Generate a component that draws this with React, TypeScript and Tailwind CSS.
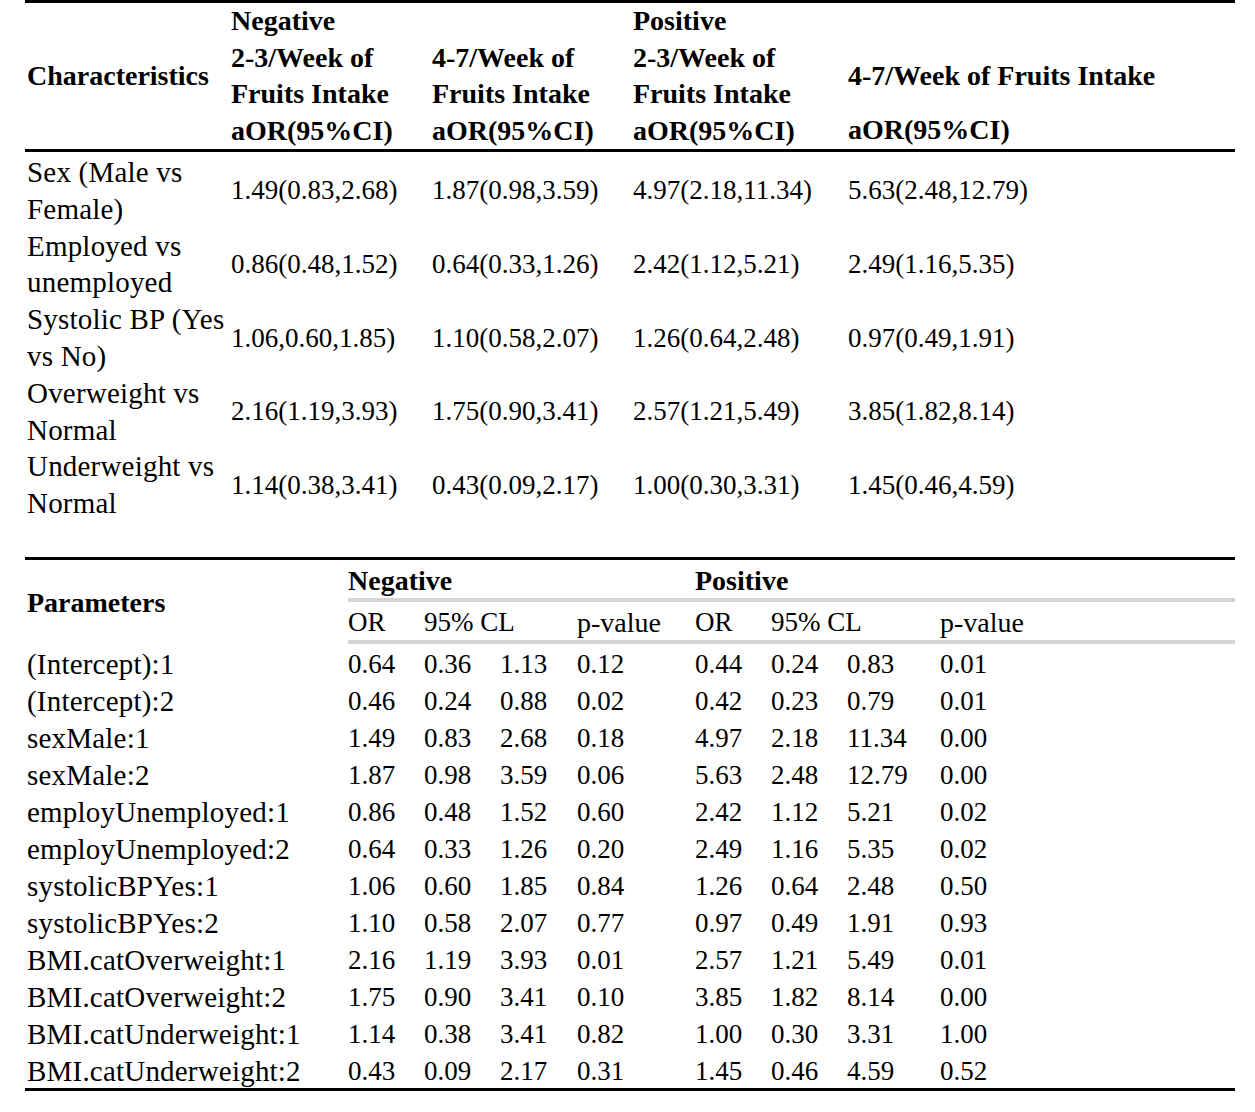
import React from 'react';

interface AdjustedRow {
    label: [string, string];
    values: string[];
}

const ADJUSTED_ROWS: AdjustedRow[] = [
    { label: ['Sex (Male vs', 'Female)'], values: ['1.49(0.83,2.68)', '1.87(0.98,3.59)', '4.97(2.18,11.34)', '5.63(2.48,12.79)'] },
    { label: ['Employed vs', 'unemployed'], values: ['0.86(0.48,1.52)', '0.64(0.33,1.26)', '2.42(1.12,5.21)', '2.49(1.16,5.35)'] },
    { label: ['Systolic BP (Yes', 'vs No)'], values: ['1.06,0.60,1.85)', '1.10(0.58,2.07)', '1.26(0.64,2.48)', '0.97(0.49,1.91)'] },
    { label: ['Overweight vs', 'Normal'], values: ['2.16(1.19,3.93)', '1.75(0.90,3.41)', '2.57(1.21,5.49)', '3.85(1.82,8.14)'] },
    { label: ['Underweight vs', 'Normal'], values: ['1.14(0.38,3.41)', '0.43(0.09,2.17)', '1.00(0.30,3.31)', '1.45(0.46,4.59)'] },
];

const MODEL_ROWS: string[][] = [
    ['(Intercept):1', '0.64', '0.36', '1.13', '0.12', '0.44', '0.24', '0.83', '0.01'],
    ['(Intercept):2', '0.46', '0.24', '0.88', '0.02', '0.42', '0.23', '0.79', '0.01'],
    ['sexMale:1', '1.49', '0.83', '2.68', '0.18', '4.97', '2.18', '11.34', '0.00'],
    ['sexMale:2', '1.87', '0.98', '3.59', '0.06', '5.63', '2.48', '12.79', '0.00'],
    ['employUnemployed:1', '0.86', '0.48', '1.52', '0.60', '2.42', '1.12', '5.21', '0.02'],
    ['employUnemployed:2', '0.64', '0.33', '1.26', '0.20', '2.49', '1.16', '5.35', '0.02'],
    ['systolicBPYes:1', '1.06', '0.60', '1.85', '0.84', '1.26', '0.64', '2.48', '0.50'],
    ['systolicBPYes:2', '1.10', '0.58', '2.07', '0.77', '0.97', '0.49', '1.91', '0.93'],
    ['BMI.catOverweight:1', '2.16', '1.19', '3.93', '0.01', '2.57', '1.21', '5.49', '0.01'],
    ['BMI.catOverweight:2', '1.75', '0.90', '3.41', '0.10', '3.85', '1.82', '8.14', '0.00'],
    ['BMI.catUnderweight:1', '1.14', '0.38', '3.41', '0.82', '1.00', '0.30', '3.31', '1.00'],
    ['BMI.catUnderweight:2', '0.43', '0.09', '2.17', '0.31', '1.45', '0.46', '4.59', '0.52'],
];

const headCell = 'h-[42px] border-b-4 border-[#d4d4d4] pt-[3px] leading-[35px]';

const App: React.FC = () => {
    return (
        <div className="min-h-[1112px] w-[1255px] bg-white text-black font-['Liberation_Serif',serif] text-[27px]">
            {/* adjusted odds ratios */}
            <div className="ml-[25px] w-[1210px] border-t-[3px] border-black">
                <div className="grid grid-cols-[206px_201px_201px_215px_1fr] border-b-[3px] border-black font-bold text-[28px] leading-[36.5px]">
                    <div className="self-center pl-[2px]">Characteristics</div>
                    <div>Negative<br />2-3/Week of<br />Fruits Intake<br />aOR(95%CI)</div>
                    <div className="self-end">4-7/Week of<br />Fruits Intake<br />aOR(95%CI)</div>
                    <div>Positive<br />2-3/Week of<br />Fruits Intake<br />aOR(95%CI)</div>
                    <div className="pt-[55px]">
                        <div>4-7/Week of Fruits Intake</div>
                        <div className="mt-[17px]">aOR(95%CI)</div>
                    </div>
                </div>
                <div className="pt-[2px]">
                    {ADJUSTED_ROWS.map((row) => (
                        <div key={row.label[0]} className="grid grid-cols-[206px_201px_201px_215px_1fr] leading-[36.8px]">
                            <div className="pl-[2px] text-[29px] tracking-[0.2px]">{row.label[0]}<br />{row.label[1]}</div>
                            {row.values.map((v, i) => (
                                <div key={i} className="self-center">{v}</div>
                            ))}
                        </div>
                    ))}
                </div>
            </div>

            {/* model coefficients */}
            <div className="ml-[25px] mt-[35px] w-[1210px] border-t-[3px] border-b-[3px] border-black">
                <div className="grid grid-cols-[323px_76px_76px_77px_118px_76px_76px_93px_1fr]">
                    <div className="row-span-2 flex items-center pl-[2px] pt-[3px] font-bold text-[28px]">Parameters</div>
                    <div className={`col-span-4 font-bold text-[28px] ${headCell}`}>Negative</div>
                    <div className={`col-span-4 font-bold text-[28px] ${headCell}`}>Positive</div>
                    <div className={headCell}>OR</div>
                    <div className={`col-span-2 ${headCell}`}>95% CL</div>
                    <div className={`text-[28px] ${headCell}`}>p-value</div>
                    <div className={headCell}>OR</div>
                    <div className={`col-span-2 ${headCell}`}>95% CL</div>
                    <div className={`text-[28px] ${headCell}`}>p-value</div>
                </div>
                {MODEL_ROWS.map((row) => (
                    <div key={row[0]} className="grid h-[37px] grid-cols-[323px_76px_76px_77px_118px_76px_76px_93px_1fr] pt-[4px] leading-[33px]">
                        {row.map((cell, i) => (
                            <div key={i} className={i === 0 ? 'pl-[2px] text-[29px] tracking-[0.2px]' : ''}>{cell}</div>
                        ))}
                    </div>
                ))}
            </div>
        </div>
    );
};

export default App;
